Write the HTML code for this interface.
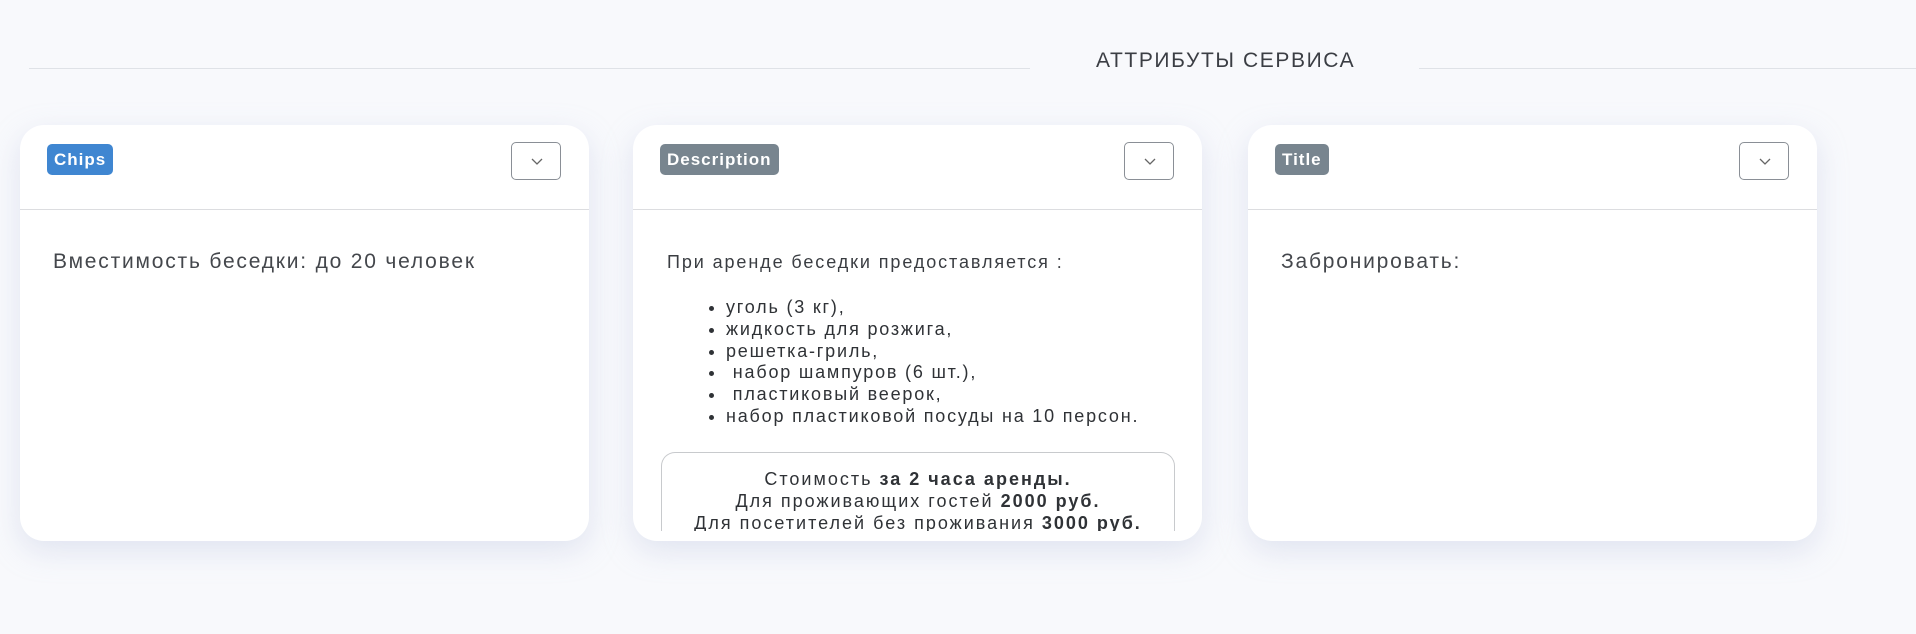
<!DOCTYPE html>
<html><head><meta charset="utf-8"><style>
*{box-sizing:border-box;margin:0;padding:0}
body{width:1916px;height:634px;background:#f8f9fc;font-family:"Liberation Sans",sans-serif;color:#3a3d42;position:relative;overflow:hidden}
.line{position:absolute;top:68px;height:1px;background:#dfe2e7}
.ttl{position:absolute;left:1096px;top:49px;font-size:21px;color:#3b3e44;letter-spacing:1.6px}
.card{position:absolute;top:125px;width:569px;height:416px;background:#fff;border-radius:24px;box-shadow:0 10px 30px rgba(180,190,220,0.35);overflow:hidden}
.hd{height:85px;border-bottom:1px solid #dcdde0;position:relative}
.badge{position:absolute;left:27px;top:19px;height:31px;line-height:31px;padding:0 7px;border-radius:5px;color:#fff;font-weight:bold;font-size:17px;letter-spacing:1px}
.btn{position:absolute;right:28px;top:17px;width:50px;height:38px;border:1px solid #8a8f96;border-radius:5px}
.btn svg{position:absolute;left:18px;top:13px}
.t1{position:absolute;left:33px;top:125px;font-size:21px;color:#44474c;letter-spacing:1.8px}
.desc{position:absolute;left:34px;top:127px;font-size:18px;color:#3a3d42;letter-spacing:1.9px}
ul{position:absolute;left:93px;top:172px;font-size:18px;line-height:21.8px;list-style:disc;color:#2f3236;letter-spacing:1.8px}
.box{position:absolute;left:28px;top:327px;width:514px;height:79px;border:1px solid #c8cacd;border-bottom:none;border-radius:14px 14px 0 0;overflow:hidden;text-align:center;font-size:18px;line-height:22px;padding-top:15px;color:#2f3236;letter-spacing:2px;white-space:nowrap}
</style></head><body>
<div class="line" style="left:29px;width:1001px"></div>
<div class="ttl">АТТРИБУТЫ СЕРВИСА</div>
<div class="line" style="left:1419px;width:497px"></div>

<div class="card" style="left:20px">
<div class="hd"><div class="badge" style="background:#3f86d1">Chips</div><div class="btn"><svg width="14" height="10"><path d="M2 3l5 5 5-5" fill="none" stroke="#666" stroke-width="1.3"/></svg></div></div>
<div class="t1">Вместимость беседки: до 20 человек</div>
</div>

<div class="card" style="left:633px">
<div class="hd"><div class="badge" style="background:#78858f">Description</div><div class="btn"><svg width="14" height="10"><path d="M2 3l5 5 5-5" fill="none" stroke="#666" stroke-width="1.3"/></svg></div></div>
<div class="desc">При аренде беседки предоставляется :</div>
<ul><li>уголь (3 кг),</li><li>жидкость для розжига,</li><li>решетка-гриль,</li><li>&nbsp;набор шампуров (6 шт.),</li><li>&nbsp;пластиковый веерок,</li><li>набор пластиковой посуды на 10 персон.</li></ul>
<div class="box">Стоимость <b>за 2 часа аренды.</b><br>Для проживающих гостей <b>2000 руб.</b><br>Для посетителей без проживания <b>3000 руб.</b></div>
</div>

<div class="card" style="left:1248px">
<div class="hd"><div class="badge" style="background:#78858f">Title</div><div class="btn"><svg width="14" height="10"><path d="M2 3l5 5 5-5" fill="none" stroke="#666" stroke-width="1.3"/></svg></div></div>
<div class="t1">Забронировать:</div>
</div>
</body></html>
